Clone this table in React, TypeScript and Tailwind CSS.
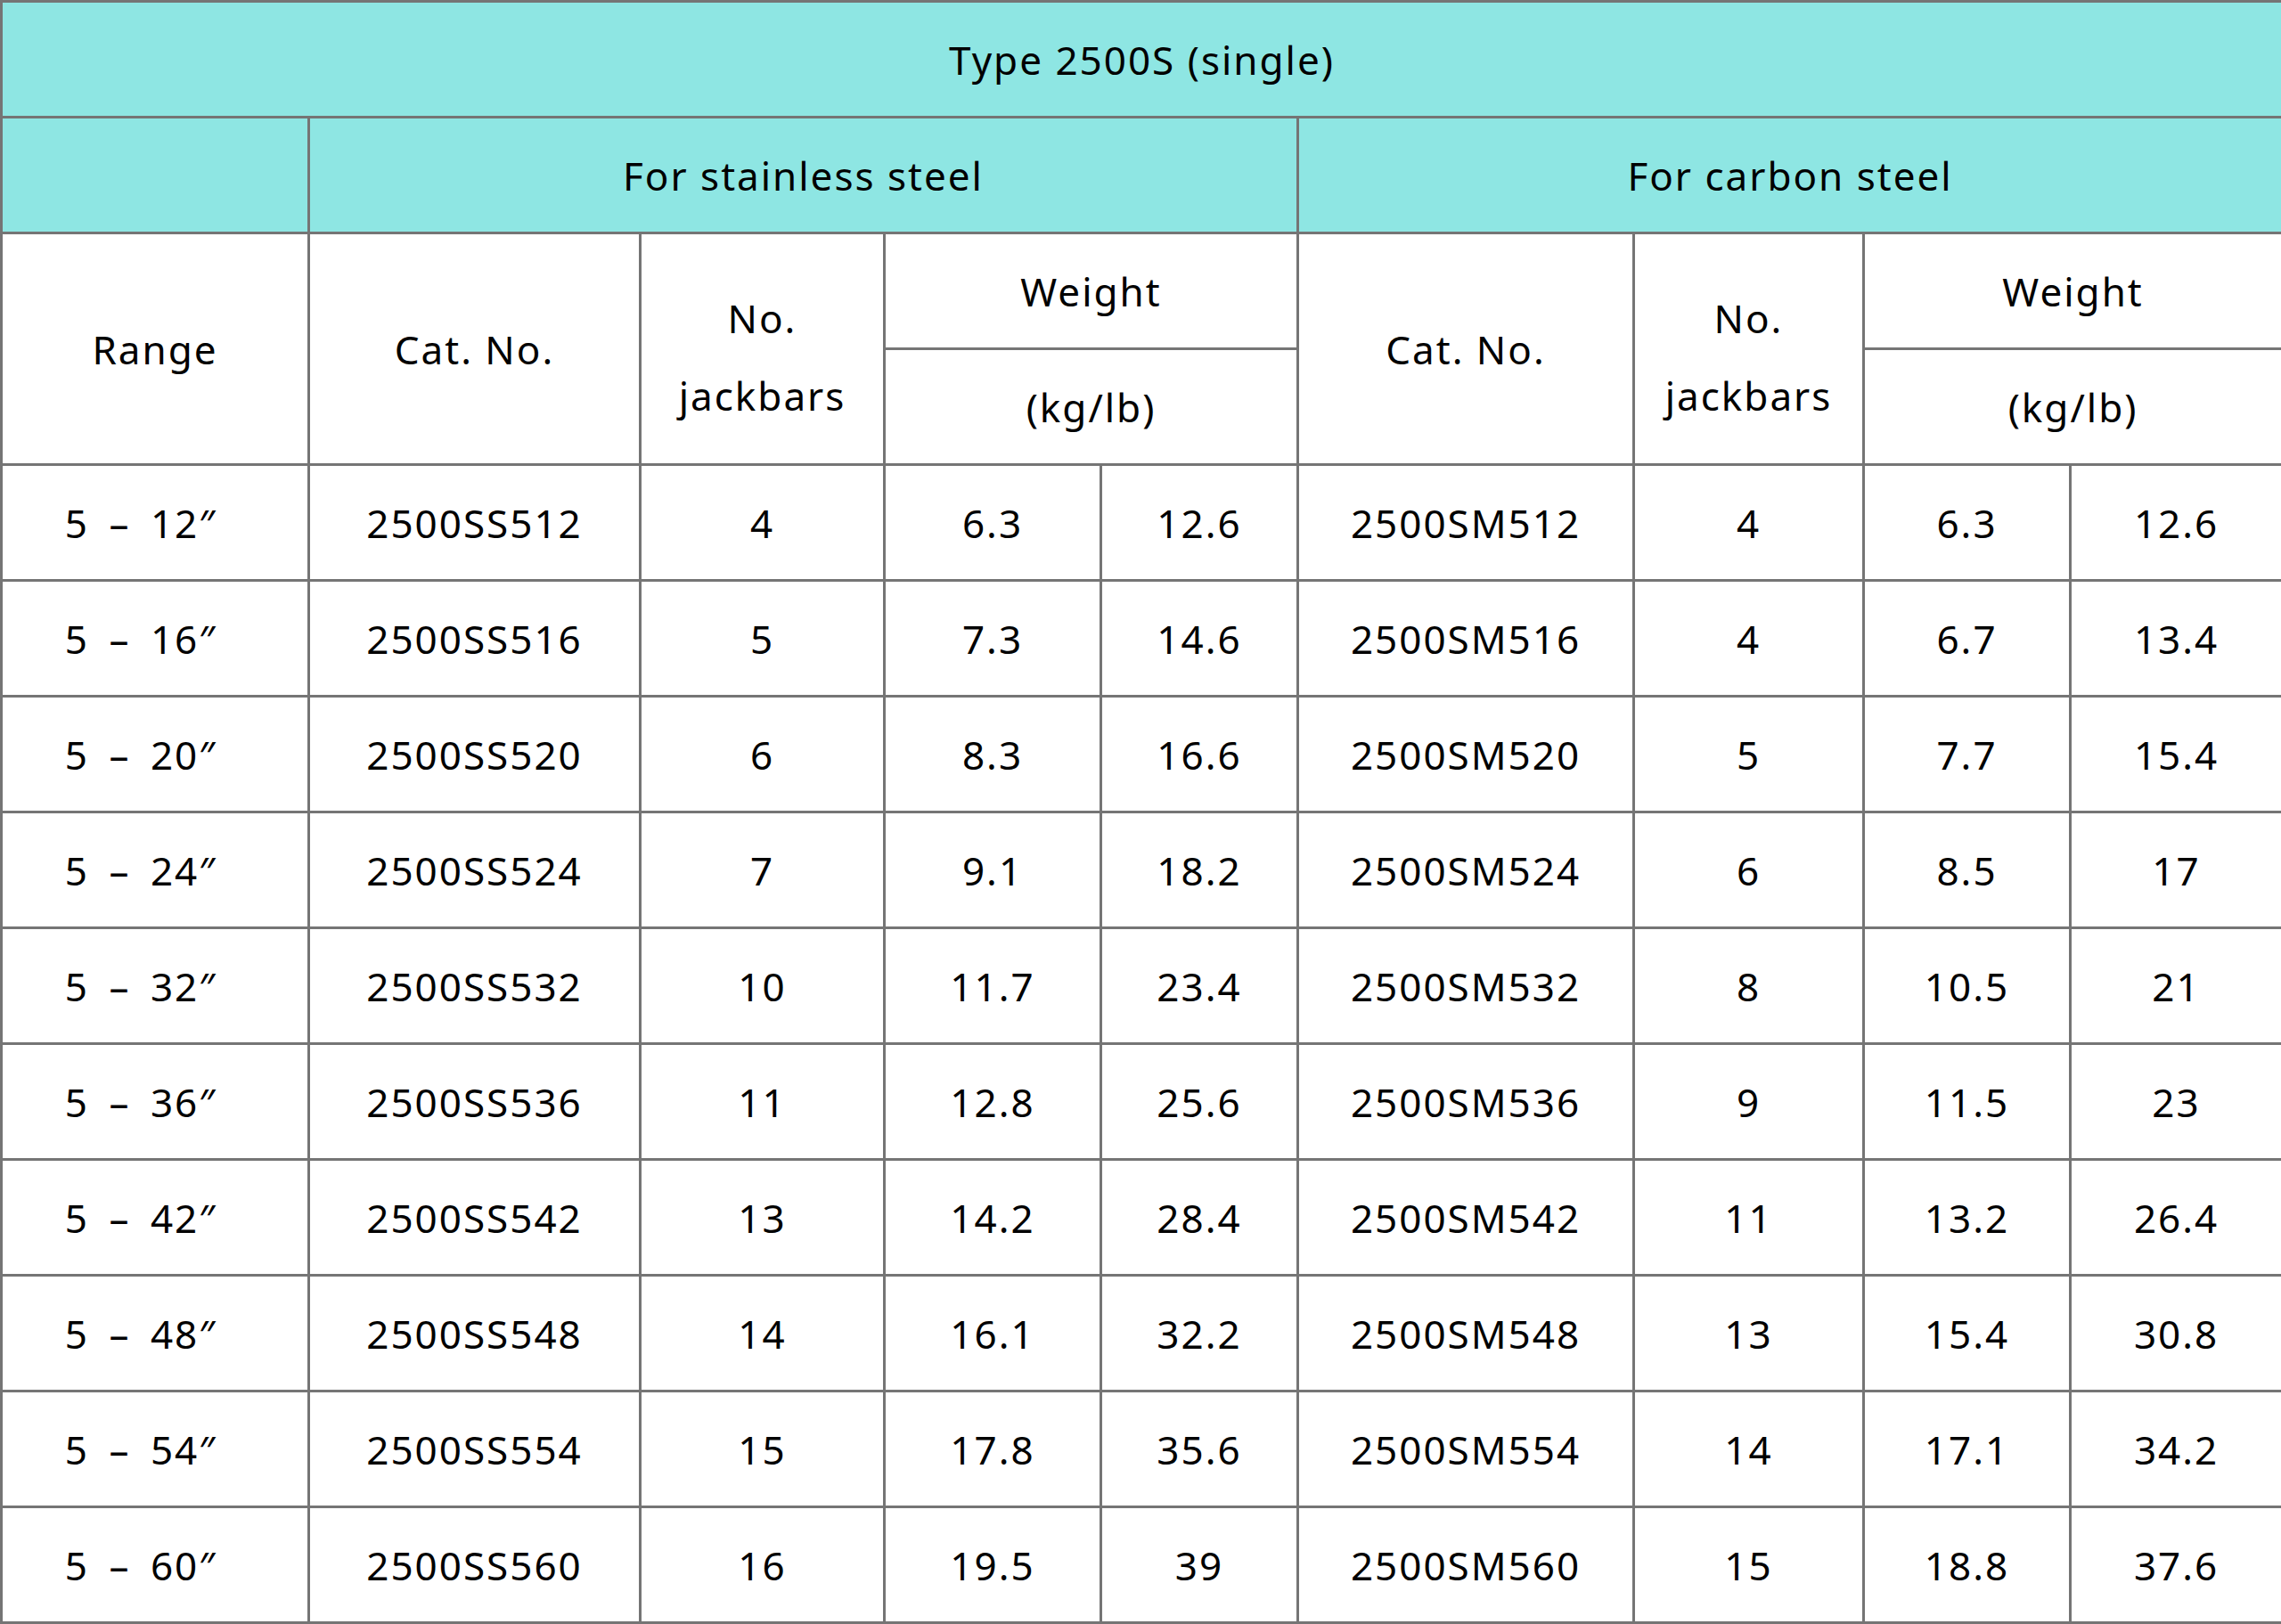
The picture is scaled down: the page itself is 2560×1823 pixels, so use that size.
const rows = [
  ['5 – 12″', '2500SS512', '4', '6.3', '12.6', '2500SM512', '4', '6.3', '12.6'],
  ['5 – 16″', '2500SS516', '5', '7.3', '14.6', '2500SM516', '4', '6.7', '13.4'],
  ['5 – 20″', '2500SS520', '6', '8.3', '16.6', '2500SM520', '5', '7.7', '15.4'],
  ['5 – 24″', '2500SS524', '7', '9.1', '18.2', '2500SM524', '6', '8.5', '17'],
  ['5 – 32″', '2500SS532', '10', '11.7', '23.4', '2500SM532', '8', '10.5', '21'],
  ['5 – 36″', '2500SS536', '11', '12.8', '25.6', '2500SM536', '9', '11.5', '23'],
  ['5 – 42″', '2500SS542', '13', '14.2', '28.4', '2500SM542', '11', '13.2', '26.4'],
  ['5 – 48″', '2500SS548', '14', '16.1', '32.2', '2500SM548', '13', '15.4', '30.8'],
  ['5 – 54″', '2500SS554', '15', '17.8', '35.6', '2500SM554', '14', '17.1', '34.2'],
  ['5 – 60″', '2500SS560', '16', '19.5', '39', '2500SM560', '15', '18.8', '37.6'],
];

const widths = [345, 372, 274, 243, 221, 377, 258, 232, 238];

const cell = 'border-[3px] border-[#757575] p-0 text-center align-middle font-normal';
const twoLine = `${cell} pt-[18px] leading-[87px]`;

export default function App() {
  return (
    <div className="bg-white">
      <table
        className="w-[2560px] table-fixed border-collapse text-[44px] tracking-[2px] text-black"
        style={{ fontFamily: '"Noto Sans", "Open Sans", sans-serif' }}
      >
        <colgroup>
          {widths.map((w, i) => (
            <col key={i} style={{ width: w }} />
          ))}
        </colgroup>
        <thead>
          <tr className="h-[130px] bg-[#8ee6e3]">
            <th colSpan={9} className={cell}>
              Type 2500S (single)
            </th>
          </tr>
          <tr className="h-[130px] bg-[#8ee6e3]">
            <th className={cell}></th>
            <th colSpan={4} className={cell}>
              For stainless steel
            </th>
            <th colSpan={4} className={cell}>
              For carbon steel
            </th>
          </tr>
          <tr className="h-[130px]">
            <th rowSpan={2} className={cell}>
              Range
            </th>
            <th rowSpan={2} className={cell}>
              Cat. No.
            </th>
            <th rowSpan={2} className={twoLine}>
              No.
              <br />
              jackbars
            </th>
            <th colSpan={2} className={cell}>
              Weight
            </th>
            <th rowSpan={2} className={cell}>
              Cat. No.
            </th>
            <th rowSpan={2} className={twoLine}>
              No.
              <br />
              jackbars
            </th>
            <th colSpan={2} className={cell}>
              Weight
            </th>
          </tr>
          <tr className="h-[130px]">
            <th colSpan={2} className={cell}>
              (kg/lb)
            </th>
            <th colSpan={2} className={cell}>
              (kg/lb)
            </th>
          </tr>
        </thead>
        <tbody>
          {rows.map((r) => (
            <tr key={r[1]} className="h-[130px]">
              {r.map((v, i) => (
                <td key={i} className={i === 0 ? `${cell} pr-[32px] [word-spacing:9px]` : cell}>
                  {v}
                </td>
              ))}
            </tr>
          ))}
        </tbody>
      </table>
    </div>
  );
}
